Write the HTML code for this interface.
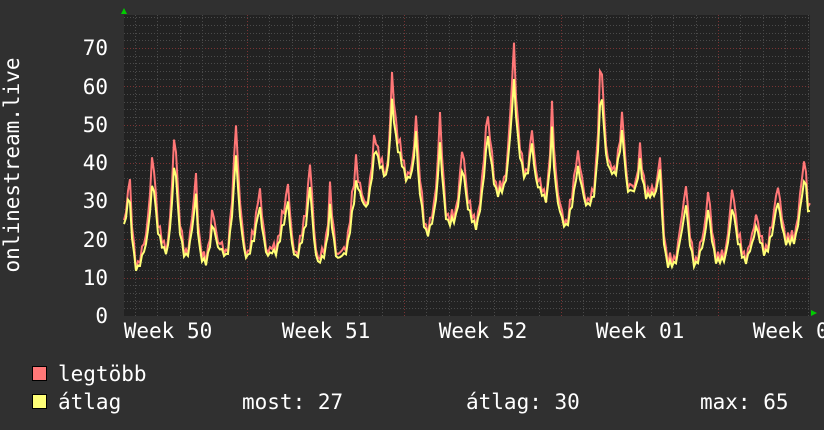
<!DOCTYPE html><html><head><style>
body{margin:0;background:#303030;width:824px;height:430px;overflow:hidden;font-family:"DejaVu Sans Mono",monospace;color:#fff}
svg{position:absolute;left:0;top:0}
</style></head><body>
<svg id="g" width="824" height="430" xmlns="http://www.w3.org/2000/svg" font-family="DejaVu Sans Mono, monospace" fill="#fff">
<rect x="124" y="15" width="686" height="301" fill="#222"/>
<g id="grid"></g>
<g id="data"></g>
<polygon points="121,14 127,14 124,8" fill="#0c0"/>
<polygon points="811,310 811,316 817,313" fill="#0c0"/>
<g font-size="21" text-anchor="end">
<text x="108" y="323">0</text><text x="108" y="285">10</text><text x="108" y="247">20</text><text x="108" y="208">30</text><text x="108" y="170">40</text><text x="108" y="132">50</text><text x="108" y="94">60</text><text x="108" y="55">70</text>
</g>
<g font-size="21" text-anchor="middle">
<text x="168" y="338">Week 50</text><text x="326" y="338">Week 51</text><text x="483" y="338">Week 52</text><text x="640" y="338">Week 01</text><text x="797" y="338">Week 02</text>
</g>
<text transform="translate(19,165) rotate(-90)" font-size="21" text-anchor="middle">onlinestream.live</text>
<rect x="32.5" y="366.5" width="14" height="14" fill="#ff7777" stroke="#000"/>
<rect x="32.5" y="394.5" width="14" height="14" fill="#ffff77" stroke="#000"/>
<g font-size="21"><text x="58" y="381">legtöbb</text><text x="58" y="409">átlag</text>
<text x="242" y="409">most: 27</text><text x="466" y="409">átlag: 30</text><text x="700" y="409">max: 65</text></g>
</svg>
<script>
var NS="http://www.w3.org/2000/svg",g=document.getElementById('grid'),d=document.getElementById('data');
function ln(x1,y1,x2,y2,c){var l=document.createElementNS(NS,'line');l.setAttribute('x1',x1);l.setAttribute('y1',y1);l.setAttribute('x2',x2);l.setAttribute('y2',y2);l.setAttribute('stroke',c);l.setAttribute('stroke-dasharray','1,2');g.appendChild(l);}
function Y(v){return 316-v*3.83;}
for(var v=2;v<80;v+=2){var y=Math.round(Y(v))+.5;if(y<15)break;ln(124,y,810,y,v%10?'#4a4a4a':'#7a3333');}
for(var x=90+22.43;x<810;x+=22.43){var xx=Math.round(x)+.5;if(xx<124)continue;var maj=Math.abs((xx-90)%157)<2||Math.abs((xx-90)%157-157)<2;ln(xx,15,xx,316,maj?'#7a3333':'#4a4a4a');}
var P=[[124,25],[129,41],[137,14],[153,43],[165,18],[175,52],[185,17],[196,38],[203,15],[213,28],[225,17],[236,52],[247,17],[259,35],[270,17],[288,36],[295,17],[310,40],[320,15],[330,33],[340,16],[356,42],[365,30],[375,50],[385,38],[392,62],[410,37],[416,54],[428,23],[440,52],[450,25],[463,45],[475,25],[487,56],[500,33],[514,71],[525,38],[532,48],[545,32],[552,54],[565,25],[577,45],[590,30],[601,69],[612,38],[623,54],[630,33],[640,43],[650,32],[660,41],[670,14],[686,36],[695,15],[708,33],[720,15],[733,35],[745,16],[756,28],[765,18],[777,36],[790,20],[805,45],[810,27]];
function val(x){for(var i=0;i<P.length-1;i++){if(x<=P[i+1][0]){var a=P[i],b=P[i+1],t=(x-a[0])/(b[0]-a[0]);var up=b[1]>a[1];t=up?Math.pow(t,2.2):1-Math.pow(1-t,2.2);return [a[1]+(b[1]-a[1])*t,Math.min(a[1],b[1])];}}return [27,20];}
var mx='',av='';
for(var x=124;x<=810;x+=2){var r=val(x),n=Math.sin(x*1.7)*1.5+Math.sin(x*0.63)*1.2;var m=r[0]+n;var a=r[1]+(r[0]-r[1])*0.78-1+n*0.6;mx+=x+','+Y(m).toFixed(1)+' ';av+=x+','+Y(a).toFixed(1)+' ';}
function pl(p,c){var e=document.createElementNS(NS,'polyline');e.setAttribute('points',p);e.setAttribute('fill','none');e.setAttribute('stroke',c);e.setAttribute('stroke-width','2');d.appendChild(e);}
pl(mx,'#ff7777');pl(av,'#ffff77');
</script>
</body></html>
